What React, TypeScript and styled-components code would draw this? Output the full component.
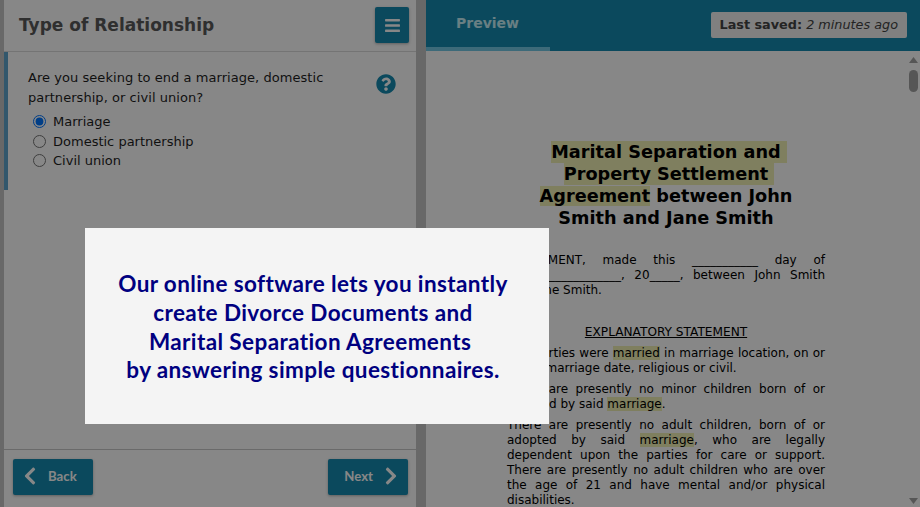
import React from 'react'
import styled, { createGlobalStyle } from 'styled-components'
import { FaBars, FaChevronLeft, FaChevronRight, FaQuestionCircle } from 'react-icons/fa'

const Teal = '#158bb0'
const Ui = '"DejaVu Sans", Verdana, sans-serif'
const Promo = 'Lato, "Open Sans", sans-serif'

const GlobalStyle = createGlobalStyle`
  html, body {
    margin: 0;
    height: 100%;
    overflow: hidden;
  }
  * {
    box-sizing: border-box;
  }
`

const Page = styled.div`
  display: flex;
  width: 920px;
  height: 507px;
  padding-left: 4px;
  background: #c4c4c4;
  font-family: ${Ui};
  color: #333;
`

const LeftPanel = styled.section`
  display: flex;
  flex-direction: column;
  width: 412px;
  margin-right: 10px;
  background: #ffffff;
`

const PanelHeader = styled.header`
  display: flex;
  align-items: center;
  justify-content: space-between;
  height: 52px;
  padding: 0 7px 1px 15px;
  border-bottom: 1px solid #dcdcdc;
`

const PanelTitle = styled.h1`
  margin: 0;
  font-size: 17px;
  font-weight: 700;
  color: #5a5a5a;
`

const MenuButton = styled.button`
  display: flex;
  align-items: center;
  justify-content: center;
  width: 34px;
  height: 36px;
  padding: 0;
  border: 0;
  border-radius: 2px;
  background: ${Teal};
  color: #fff;
  font-size: 17px;
  box-shadow: 0 1px 3px rgba(0, 0, 0, 0.3);
`

const QuestionBlock = styled.div`
  display: flex;
  justify-content: space-between;
  height: 138px;
  padding: 16px 20px 0 20px;
  border-left: 4px solid #5fa5cc;
`

const QuestionText = styled.p`
  margin: 0 0 4px;
  font-size: 13px;
  line-height: 20px;
  letter-spacing: 0.05px;
  color: #1f1f1f;
`

const HelpIcon = styled.div`
  margin-top: 6px;
  color: ${Teal};
  font-size: 20px;
  line-height: 0;
`

const OptionList = styled.div`
  display: flex;
  flex-direction: column;
  width: 340px;
`

const Option = styled.label`
  display: flex;
  align-items: center;
  height: 19.5px;
  padding-left: 5px;
  font-size: 13px;
  color: #1f1f1f;
`

const Radio = styled.input`
  width: 13px;
  height: 13px;
  margin: 0 7px 0 0;
`

const Spacer = styled.div`
  flex: 1;
`

const PanelFooter = styled.footer`
  display: flex;
  justify-content: space-between;
  height: 58px;
  padding: 9px 8px 0 9px;
  border-top: 1px solid #c8c8c8;
`

const NavButton = styled.button<{ $end?: boolean }>`
  display: flex;
  align-items: center;
  justify-content: ${p => (p.$end ? 'flex-end' : 'flex-start')};
  gap: 8px;
  width: 80px;
  height: 36px;
  padding: 0 7px 2px;
  border: 0;
  border-radius: 2px;
  background: ${Teal};
  color: #fff;
  font-family: ${Promo};
  font-size: 13.2px;
  font-weight: 700;
  box-shadow: 0 1px 3px rgba(0, 0, 0, 0.3);

  svg {
    font-size: 20px;
  }
`

const RightPanel = styled.section`
  display: flex;
  flex: 1;
  flex-direction: column;
  min-width: 0;
  background: #ffffff;
`

const PreviewHeader = styled.header`
  display: flex;
  align-items: flex-start;
  justify-content: space-between;
  height: 51px;
  padding-right: 13px;
  background: ${Teal};
`

const PreviewTab = styled.div`
  width: 124px;
  height: 51px;
  padding: 15px 0 0 30px;
  border-bottom: 4px solid #74c8e4;
  font-size: 14px;
  font-weight: 700;
  color: #c6f0f8;
`

const SavedBadge = styled.div`
  margin-top: 12px;
  padding: 0 9px;
  height: 26px;
  line-height: 26px;
  border-radius: 2px;
  background: #f2f2f2;
  font-size: 12.8px;
  color: #444;

  b {
    font-weight: 700;
  }
  i {
    font-style: italic;
  }
`

const PreviewBody = styled.div`
  display: flex;
  flex: 1;
  min-height: 0;
`

const DocumentArea = styled.div`
  flex: 1;
  overflow: hidden;
  padding: 90px 82px 0 81px;
  color: #000;
`

const DocTitle = styled.h2`
  margin: 0 0 24px;
  font-size: 17.7px;
  line-height: 22px;
  font-weight: 700;
  text-align: center;
`

const DocHeading = styled.div`
  margin: 27px 0 6px;
  font-size: 12.15px;
  line-height: 15px;
  text-align: center;
  text-decoration: underline;
`

const DocParagraph = styled.p`
  margin: 0 0 6px;
  font-size: 12px;
  line-height: 15px;
  text-align: justify;
`

const Mark = styled.span<{ $tail?: boolean }>`
  background: #f0f0b4;
  padding: ${p => (p.$tail ? '1px 6px 1px 0' : '0')};
  margin-right: ${p => (p.$tail ? '-6px' : '0')};
`

const Scrollbar = styled.div`
  position: relative;
  width: 13px;
  display: flex;
  flex-direction: column;
  justify-content: space-between;
  align-items: center;
  padding: 6px 0 3px;
  color: #a3a3a3;
`

const ScrollThumb = styled.div`
  position: absolute;
  top: 19px;
  left: 2px;
  width: 9px;
  height: 22px;
  border-radius: 5px;
  background: #a3a3a3;
`

const Overlay = styled.div`
  position: fixed;
  inset: 0;
  background: rgba(0, 0, 0, 0.47);
`

const PromoBox = styled.div`
  position: absolute;
  top: 228px;
  left: 85px;
  display: flex;
  flex-direction: column;
  justify-content: center;
  width: 464px;
  height: 196px;
  padding: 3px 8px 0 0;
  background: #f4f4f4;
  font-family: ${Promo};
  font-size: 22.5px;
  font-weight: 700;
  letter-spacing: 0.39px;
  line-height: 28.8px;
  text-align: center;
  color: #000080;
`

const ScrollArrow = ({ down }: { down?: boolean }) => (
  <svg width="9" height="6" viewBox="0 0 9 6" fill="currentColor">
    <path d={down ? 'M0 0h9L4.500 6z' : 'M0 6h9L4.500 0z'} />
  </svg>
)

const options = ['Marriage', 'Domestic partnership', 'Civil union']

const App = () => {
  return (
    <>
      <GlobalStyle />
      <Page>
        <LeftPanel>
          <PanelHeader>
            <PanelTitle>Type of Relationship</PanelTitle>
            <MenuButton aria-label="Menu">
              <FaBars />
            </MenuButton>
          </PanelHeader>
          <QuestionBlock>
            <div>
              <QuestionText>
                Are you seeking to end a marriage, domestic
                <br />
                partnership, or civil union?
              </QuestionText>
              <OptionList>
                {options.map((v, i) => (
                  <Option key={v}>
                    <Radio type="radio" name="relationship" defaultChecked={i === 0} />
                    {v}
                  </Option>
                ))}
              </OptionList>
            </div>
            <HelpIcon>
              <FaQuestionCircle />
            </HelpIcon>
          </QuestionBlock>
          <Spacer />
          <PanelFooter>
            <NavButton>
              <FaChevronLeft />
              Back
            </NavButton>
            <NavButton $end>
              Next
              <FaChevronRight />
            </NavButton>
          </PanelFooter>
        </LeftPanel>
        <RightPanel>
          <PreviewHeader>
            <PreviewTab>Preview</PreviewTab>
            <SavedBadge>
              <b>Last saved:</b> <i>2 minutes ago</i>
            </SavedBadge>
          </PreviewHeader>
          <PreviewBody>
            <DocumentArea>
              <DocTitle>
                <Mark $tail>Marital Separation and</Mark>
                <br />
                <Mark $tail>Property Settlement</Mark>
                <br />
                <Mark>Agreement</Mark> between John
                <br />
                Smith and Jane Smith
              </DocTitle>
              <DocParagraph>
                AGREEMENT, made this ___________ day of ___________________, 20_____, between John Smith and Jane Smith.
              </DocParagraph>
              <DocHeading>EXPLANATORY STATEMENT</DocHeading>
              <DocParagraph>
                The parties were <Mark>married</Mark> in marriage location, on or about marriage date, religious or civil.
              </DocParagraph>
              <DocParagraph>
                There are presently no minor children born of or adopted by said <Mark>marriage</Mark>.
              </DocParagraph>
              <DocParagraph>
                There are presently no adult children, born of or adopted by said <Mark>marriage</Mark>, who are legally
                dependent upon the parties for care or support. There are presently no adult children who are over the
                age of 21 and have mental and/or physical disabilities.
              </DocParagraph>
            </DocumentArea>
            <Scrollbar>
              <ScrollArrow />
              <ScrollThumb />
              <ScrollArrow down />
            </Scrollbar>
          </PreviewBody>
        </RightPanel>
      </Page>
      <Overlay />
      <PromoBox>
        <div>Our online software lets you instantly</div>
        <div>create Divorce Documents and</div>
        <div>Marital Separation Agreements&nbsp;</div>
        <div>by answering simple questionnaires.</div>
      </PromoBox>
    </>
  )
}

export default App
